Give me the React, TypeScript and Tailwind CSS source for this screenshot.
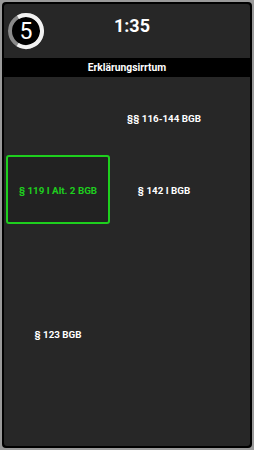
import React from "react";

function Timer() {
  const r = 16;
  const c = 2 * Math.PI * r;
  const white = c * (240 / 360);
  return (
    <div className="relative w-[38px] h-[38px]">
      <svg width="38" height="38" viewBox="0 0 38 38" className="absolute inset-0">
        <circle cx="19" cy="19" r="18" fill="#000" />
        <circle cx="19" cy="19" r={r} fill="none" stroke="#8a8a8a" strokeWidth="4" />
        <circle
          cx="19"
          cy="19"
          r={r}
          fill="none"
          stroke="#f2f2f2"
          strokeWidth="4"
          strokeDasharray={`${white} ${c}`}
          transform="rotate(-120 19 19)"
        />
      </svg>
      <div className="absolute inset-0 flex items-center justify-center text-white text-[23px] leading-none" style={{ fontFamily: "Roboto, sans-serif" }}>
        5
      </div>
    </div>
  );
}

function Cell({ label, active }: { label?: string; active?: boolean }) {
  return (
    <div
      className={
        "h-[69px] flex items-center justify-center pt-[3px] rounded-[3px] text-[9.8px] font-bold " +
        (active ? "border-2 border-[#1ecf1e] text-[#1ecf1e] bg-[#222]" : "text-white")
      }
    >
      {label}
    </div>
  );
}

export default function App() {
  return (
    <div className="w-[254px] h-[450px] bg-[#9a9a9a] p-[2px]" style={{ fontFamily: "Roboto, 'Liberation Sans', sans-serif" }}>
      <div className="w-full h-full bg-black rounded-[4px] p-[2px] flex">
        <div className="flex-1 bg-[#272727] rounded-[3px] flex flex-col overflow-hidden">
          <div className="h-[54px] flex items-center px-[3px] relative">
            <Timer />
            <div className="absolute left-[10px] right-0 top-0 h-[42px] flex items-center justify-center text-white font-bold text-[18px]">
              1:35
            </div>
          </div>
          <div className="h-[19px] bg-black flex items-center justify-center text-white font-bold text-[10.3px]">
            Erklärungsirrtum
          </div>
          <div className="grid grid-cols-[104px_104px] gap-x-[2px] gap-y-[3px] pl-[2px] pt-[6px]">
            <Cell />
            <Cell label="§§ 116-144 BGB" />
            <Cell label="§ 119 I Alt. 2 BGB" active />
            <Cell label="§ 142 I BGB" />
            <Cell />
            <Cell />
            <Cell label="§ 123 BGB" />
            <Cell />
          </div>
        </div>
      </div>
    </div>
  );
}
